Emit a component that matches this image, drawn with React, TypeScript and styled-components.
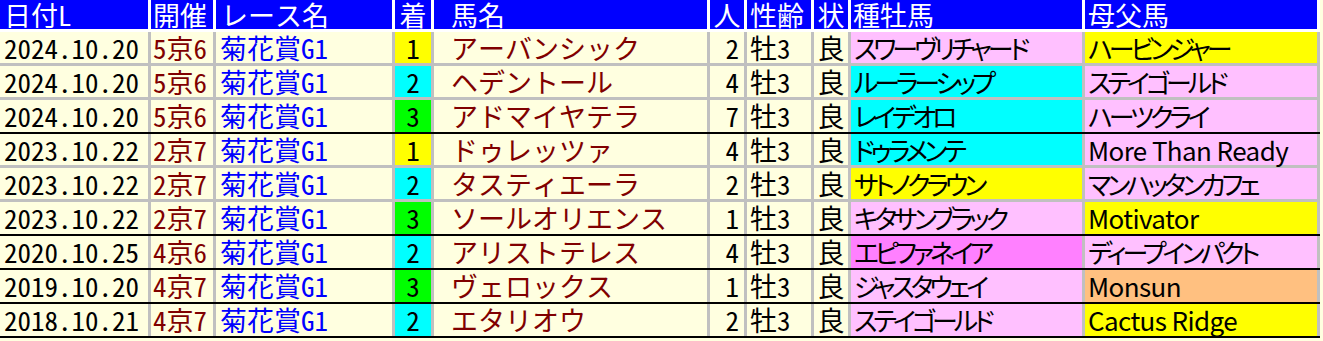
import React from "react";
import styled, { createGlobalStyle } from "styled-components";

const GlobalStyle = createGlobalStyle`
  html, body {
    margin: 0;
    padding: 0;
    background: #ffffe0;
  }
  body {
    font-family: "Noto Sans Mono CJK JP", "Noto Sans CJK JP", monospace;
  }
`;

const COLS = "148px 62px 176px 36px 273px 34px 64px 34px 231px 232px 0px";

const Table = styled.div`
  display: flex;
  flex-direction: column;
  width: max-content;
`;

const HeaderRow = styled.div`
  display: grid;
  grid-template-columns: ${COLS};
  column-gap: 3px;
  background: #ffffff;
  border-bottom: 3px solid #ffffff;
`;

const HeadCell = styled.div<{ $pad?: number; $align?: string }>`
  height: 29px;
  line-height: 29px;
  background: #0000ff;
  color: #ffffff;
  font-size: 27px;
  padding-left: ${(p) => p.$pad ?? 3}px;
  text-align: ${(p) => p.$align ?? "left"};
  white-space: nowrap;
`;

const Row = styled.div<{ $end?: boolean }>`
  display: grid;
  grid-template-columns: ${COLS};
  column-gap: 3px;
  background: #c0c0c0;
  border-bottom: ${(p) => (p.$end ? "2px solid #000000" : "3px solid #c0c0c0")};
`;

const Cell = styled.div<{
  $bg?: string;
  $color?: string;
  $align?: string;
  $pad?: number;
  $end?: boolean;
}>`
  height: ${(p) => (p.$end ? 32 : 31)}px;
  line-height: 31px;
  background: ${(p) => p.$bg ?? "#ffffe0"};
  color: ${(p) => p.$color ?? "#000000"};
  font-size: 27px;
  text-align: ${(p) => p.$align ?? "left"};
  padding-left: ${(p) => (p.$align === "right" ? 0 : p.$pad ?? 3)}px;
  padding-right: ${(p) => (p.$align === "right" ? 5 : 0)}px;
  white-space: nowrap;
`;

/* pedigree columns use a proportional face, as the source page does */
const PedCell = styled(Cell)<{ $latin?: boolean }>`
  font-family: "Noto Sans CJK JP", sans-serif;
  font-feature-settings: "palt" 1;
  font-size: 26px;
  letter-spacing: ${(p) => (p.$latin ? "-0.6px" : "-4px")};
`;

const Spacer = styled.div`
  background: #c0c0c0;
`;

const HeadSpacer = styled.div`
  background: #ffffff;
`;

const YELLOW = "#ffff00";
const CYAN = "#00ffff";
const GREEN = "#00ff00";
const PINK = "#ffc0ff";
const MAGENTA = "#ff80ff";
const ORANGE = "#ffc080";

const placeColor: Record<number, string> = { 1: YELLOW, 2: CYAN, 3: GREEN };

const isLatin = (s: string) => /^[\x20-\x7e]+$/.test(s);

type Race = {
  date: string;
  kai: string;
  place: number;
  horse: string;
  pop: number;
  sire: string;
  sireBg: string;
  dam: string;
  damBg: string;
  end?: boolean;
};

const rows: Race[] = [
  { date: "2024.10.20", kai: "5京6", place: 1, horse: "アーバンシック", pop: 2, sire: "スワーヴリチャード", sireBg: PINK, dam: "ハービンジャー", damBg: YELLOW },
  { date: "2024.10.20", kai: "5京6", place: 2, horse: "ヘデントール", pop: 4, sire: "ルーラーシップ", sireBg: CYAN, dam: "ステイゴールド", damBg: PINK },
  { date: "2024.10.20", kai: "5京6", place: 3, horse: "アドマイヤテラ", pop: 7, sire: "レイデオロ", sireBg: CYAN, dam: "ハーツクライ", damBg: PINK, end: true },
  { date: "2023.10.22", kai: "2京7", place: 1, horse: "ドゥレッツァ", pop: 4, sire: "ドゥラメンテ", sireBg: CYAN, dam: "More Than Ready", damBg: PINK },
  { date: "2023.10.22", kai: "2京7", place: 2, horse: "タスティエーラ", pop: 2, sire: "サトノクラウン", sireBg: YELLOW, dam: "マンハッタンカフェ", damBg: PINK },
  { date: "2023.10.22", kai: "2京7", place: 3, horse: "ソールオリエンス", pop: 1, sire: "キタサンブラック", sireBg: PINK, dam: "Motivator", damBg: YELLOW, end: true },
  { date: "2020.10.25", kai: "4京6", place: 2, horse: "アリストテレス", pop: 4, sire: "エピファネイア", sireBg: MAGENTA, dam: "ディープインパクト", damBg: PINK, end: true },
  { date: "2019.10.20", kai: "4京7", place: 3, horse: "ヴェロックス", pop: 1, sire: "ジャスタウェイ", sireBg: PINK, dam: "Monsun", damBg: ORANGE, end: true },
  { date: "2018.10.21", kai: "4京7", place: 2, horse: "エタリオウ", pop: 2, sire: "ステイゴールド", sireBg: PINK, dam: "Cactus Ridge", damBg: YELLOW, end: true },
];

const App: React.FC = () => {
  return (
    <>
      <GlobalStyle />
      <Table>
        <HeaderRow>
          <HeadCell $pad={4}>日付L</HeadCell>
          <HeadCell $pad={2}>開催</HeadCell>
          <HeadCell $pad={5}>レース名</HeadCell>
          <HeadCell $pad={0} $align="center">着</HeadCell>
          <HeadCell $pad={17}>馬名</HeadCell>
          <HeadCell $pad={0} $align="center">人</HeadCell>
          <HeadCell $pad={3}>性齢</HeadCell>
          <HeadCell $pad={0} $align="center">状</HeadCell>
          <HeadCell $pad={2}>種牡馬</HeadCell>
          <HeadCell $pad={3}>母父馬</HeadCell>
          <HeadSpacer />
        </HeaderRow>
        {rows.map((r, i) => (
          <Row key={i} $end={r.end}>
            <Cell $end={r.end} $pad={4}>{r.date}</Cell>
            <Cell $end={r.end} $pad={2} $color="#800000">{r.kai}</Cell>
            <Cell $end={r.end} $pad={4} $color="#0000ff">菊花賞G1</Cell>
            <Cell $end={r.end} $pad={0} $align="center" $bg={placeColor[r.place]}>{r.place}</Cell>
            <Cell $end={r.end} $pad={17} $color="#800000">{r.horse}</Cell>
            <Cell $end={r.end} $align="right">{r.pop}</Cell>
            <Cell $end={r.end} $pad={3}>牡3</Cell>
            <Cell $end={r.end} $pad={0} $align="center">良</Cell>
            <PedCell $end={r.end} $pad={3} $bg={r.sireBg} $latin={isLatin(r.sire)}>{r.sire}</PedCell>
            <PedCell $end={r.end} $pad={3} $bg={r.damBg} $latin={isLatin(r.dam)}>{r.dam}</PedCell>
            <Spacer />
          </Row>
        ))}
      </Table>
    </>
  );
};

export default App;
